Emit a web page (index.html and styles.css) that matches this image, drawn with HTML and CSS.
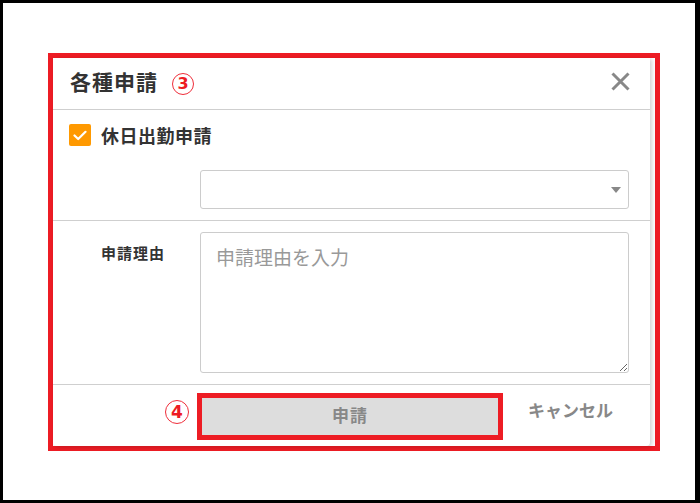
FILE: index.html
```html
<!DOCTYPE html>
<html lang="ja">
<head>
<meta charset="utf-8">
<title>各種申請</title>
<link rel="stylesheet" href="styles.css">
</head>
<body>
<div class="screen">
  <div class="callout">
    <div class="modal">
      <div class="modal-header">
        <h2 class="modal-title">各種申請</h2>
        <span class="marker marker-title">3</span>
        <button class="close" type="button" aria-label="閉じる">
          <svg width="19" height="19" viewBox="0 0 19 19"><path d="M1.5 1.5 L17.5 17.5 M17.5 1.5 L1.5 17.5" stroke="#888" stroke-width="3" fill="none"/></svg>
        </button>
      </div>
      <div class="section section-type">
        <label class="check-row">
          <span class="checkbox">
            <svg width="14" height="11" viewBox="0 0 14 11"><path d="M1.5 5.5 L5.2 9 L12.5 1.8" stroke="#fff" stroke-width="2.2" fill="none" stroke-linecap="round" stroke-linejoin="round"/></svg>
          </span>
          <span class="check-label">休日出勤申請</span>
        </label>
        <div class="field-row">
          <div class="field-label"></div>
          <div class="select">
            <span class="select-arrow"></span>
          </div>
        </div>
      </div>
      <div class="section section-reason">
        <div class="field-row">
          <div class="field-label reason-label">申請理由</div>
          <textarea class="textarea" placeholder="申請理由を入力"></textarea>
        </div>
      </div>
      <div class="modal-footer">
        <span class="marker marker-footer">4</span>
        <div class="btn-callout">
          <button class="btn-submit" type="button">申請</button>
        </div>
        <button class="btn-cancel" type="button">キャンセル</button>
      </div>
    </div>
  </div>
</div>
</body>
</html>
```

FILE: styles.css
```css
html, body {
  margin: 0;
  padding: 0;
  background: #fff;
}

body {
  font-family: "Noto Sans CJK JP", "Noto Sans", sans-serif;
  color: #333;
}

.screen {
  width: 700px;
  height: 503px;
  box-sizing: border-box;
  border: 3px solid #000;
  border-right-width: 5px;
  padding: 50px 0 0 45px;
  background: #fff;
}

.callout {
  width: 612px;
  height: 398px;
  box-sizing: border-box;
  border: 5px solid #ed1c24;
}

.modal {
  width: 597px;
  height: 100%;
  background: #fff;
  border-radius: 0 0 4px 4px;
  box-shadow: 2px 1px 4px rgba(0, 0, 0, 0.18);
  display: flex;
  flex-direction: column;
}

.modal-header {
  display: flex;
  align-items: center;
  height: 51px;
  box-sizing: content-box;
  padding: 0 20px 0 17px;
  border-bottom: 1px solid #cfcfcf;
}

.modal-title {
  margin: 0;
  font-size: 21px;
  font-weight: 700;
  letter-spacing: 1px;
  color: #333;
  line-height: 1;
  margin-top: -5px;
}

.marker {
  display: inline-flex;
  align-items: center;
  justify-content: center;
  width: 22px;
  height: 22px;
  box-sizing: border-box;
  border: 1px solid #ef2d3a;
  border-radius: 50%;
  color: #ed1c24;
  font-family: "DejaVu Sans", sans-serif;
  font-size: 16px;
  font-weight: 700;
  line-height: 1;
}

.marker-title {
  margin-left: 14px;
  margin-top: 0;
}

.close {
  margin-left: auto;
  padding: 0;
  border: 0;
  background: none;
  width: 19px;
  height: 19px;
  display: flex;
  margin-top: -4px;
}

.section {
  padding: 0 21px 0 0;
  border-bottom: 1px solid #cfcfcf;
}

.section-type {
  padding-top: 14px;
  padding-bottom: 11px;
}

.check-row {
  display: flex;
  align-items: center;
  gap: 10px;
  padding-left: 16px;
  height: 22px;
}

.checkbox {
  width: 22px;
  height: 22px;
  border-radius: 2px;
  background: #ff9900;
  display: flex;
  align-items: center;
  justify-content: center;
}

.check-label {
  font-size: 18px;
  font-weight: 700;
  letter-spacing: 0.5px;
  color: #333;
  line-height: 1;
  margin-top: -1px;
}

.field-row {
  display: grid;
  grid-template-columns: 147px 1fr;
}

.section-type .field-row {
  margin-top: 24px;
}

.field-label {
  padding-left: 48px;
}

.select {
  height: 39px;
  box-sizing: border-box;
  border: 1px solid #cccccc;
  border-radius: 3px;
  background: #fff;
  display: flex;
  align-items: center;
  justify-content: flex-end;
  padding-right: 7px;
}

.select-arrow {
  width: 0;
  height: 0;
  border-left: 5px solid transparent;
  border-right: 5px solid transparent;
  border-top: 6px solid #888;
}

.section-reason {
  padding-top: 11px;
  padding-bottom: 11px;
}

.reason-label {
  font-size: 15px;
  font-weight: 700;
  letter-spacing: 1px;
  color: #333;
  line-height: 20px;
  padding-top: 11px;
}

.textarea {
  display: block;
  width: 100%;
  height: 141px;
  box-sizing: border-box;
  margin: 0;
  border: 1px solid #cccccc;
  border-radius: 3px;
  padding: 12px 15px;
  font-family: "Noto Sans CJK JP", sans-serif;
  font-size: 19px;
  line-height: 24px;
  color: #333;
  resize: vertical;
  outline: none;
}

.textarea::placeholder {
  color: #999;
}

.modal-footer {
  flex: 1;
  display: flex;
  align-items: flex-start;
  padding: 8px 0 0 112px;
}

.marker-footer {
  width: 24px;
  height: 24px;
  margin-top: 7px;
  font-size: 17px;
}

.btn-callout {
  margin-left: 8px;
  border: 5px solid #ed1c24;
}

.btn-submit {
  display: block;
  width: 296px;
  height: 37px;
  margin: 0;
  border: 0;
  background: #dddddd;
  color: #888;
  font-family: "Noto Sans CJK JP", sans-serif;
  font-size: 17px;
  font-weight: 700;
  letter-spacing: 1px;
  padding: 0 0 5px;
}

.btn-cancel {
  margin-left: 25px;
  margin-top: 5px;
  padding: 0;
  border: 0;
  background: none;
  color: #888;
  font-family: "Noto Sans CJK JP", sans-serif;
  font-size: 17px;
  font-weight: 700;
  line-height: 24px;
}
```
